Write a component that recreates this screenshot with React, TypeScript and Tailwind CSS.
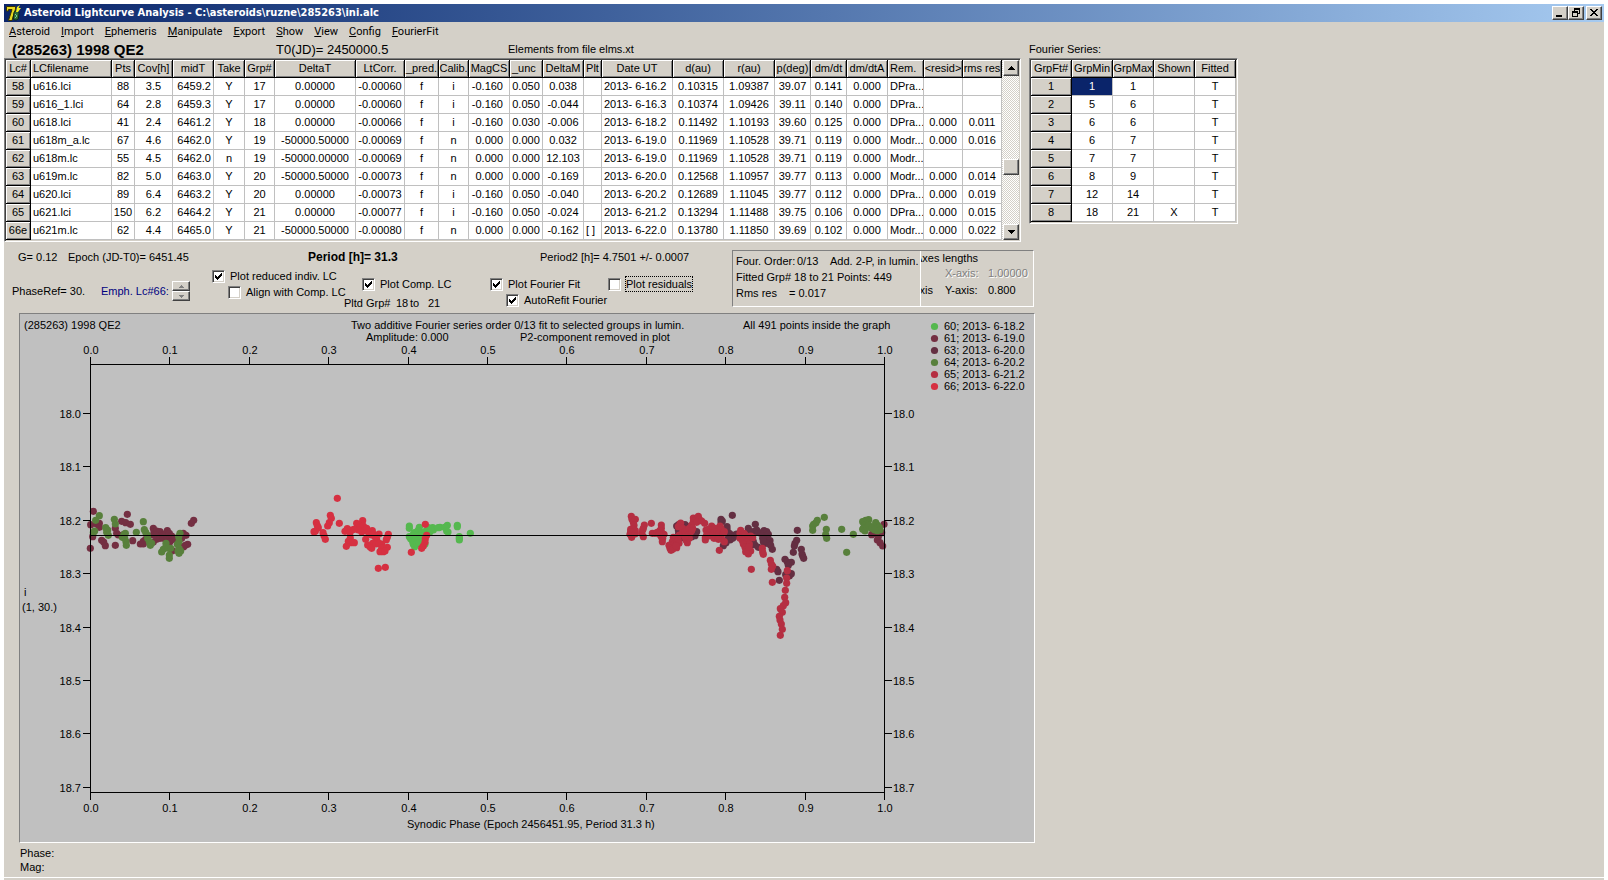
import type { ReactNode } from "react";

const RAISED =
  "border border-t-white border-l-white border-r-[#404040] border-b-[#404040] bg-[#d4d0c8] shadow-[inset_-1px_-1px_0_#808080]";
const SUNKEN =
  "border border-t-[#808080] border-l-[#808080] border-r-white border-b-white shadow-[inset_1px_1px_0_#404040,inset_-1px_-1px_0_#d4d0c8]";

type Align = "l" | "c" | "r" | "m";
type Column = { name: string; w: number; align: Align; head?: "l" };

const lcColumns: Column[] = [
  { name: "Lc#", w: 25, align: "c" },
  { name: "LCfilename", w: 81, align: "l", head: "l" },
  { name: "Pts", w: 23, align: "c" },
  { name: "Cov[h]", w: 38, align: "c" },
  { name: "midT", w: 41, align: "r" },
  { name: "Take", w: 31, align: "c" },
  { name: "Grp#", w: 30, align: "c" },
  { name: "DeltaT", w: 81, align: "c" },
  { name: "LtCorr.", w: 49, align: "c" },
  { name: "_pred.", w: 34, align: "c" },
  { name: "Calib.", w: 30, align: "c" },
  { name: "MagCS", w: 41, align: "m" },
  { name: "_unc", w: 33, align: "c", head: "l" },
  { name: "DeltaM", w: 41, align: "c" },
  { name: "Plt", w: 18, align: "l" },
  { name: "Date UT", w: 71, align: "l" },
  { name: "d(au)", w: 51, align: "c" },
  { name: "r(au)", w: 51, align: "c" },
  { name: "p(deg)", w: 36, align: "c" },
  { name: "dm/dt", w: 36, align: "c" },
  { name: "dm/dtA", w: 41, align: "c" },
  { name: "Rem.", w: 36, align: "l", head: "l" },
  { name: "<resid>", w: 39, align: "c" },
  { name: "rms res", w: 39, align: "c" },
];

const lcRows: string[][] = [
  ["58", "u616.lci", "88", "3.5", "6459.2", "Y", "17", "0.00000", "-0.00060", "f", "i", "-0.160", "0.050", "0.038", "", "2013- 6-16.2", "0.10315", "1.09387", "39.07", "0.141", "0.000", "DPra...", "", ""],
  ["59", "u616_1.lci", "64", "2.8", "6459.3", "Y", "17", "0.00000", "-0.00060", "f", "i", "-0.160", "0.050", "-0.044", "", "2013- 6-16.3", "0.10374", "1.09426", "39.11", "0.140", "0.000", "DPra...", "", ""],
  ["60", "u618.lci", "41", "2.4", "6461.2", "Y", "18", "0.00000", "-0.00066", "f", "i", "-0.160", "0.030", "-0.006", "", "2013- 6-18.2", "0.11492", "1.10193", "39.60", "0.125", "0.000", "DPra...", "0.000", "0.011"],
  ["61", "u618m_a.lc", "67", "4.6", "6462.0", "Y", "19", "-50000.50000", "-0.00069", "f", "n", "0.000", "0.000", "0.032", "", "2013- 6-19.0", "0.11969", "1.10528", "39.71", "0.119", "0.000", "Modr...", "0.000", "0.016"],
  ["62", "u618m.lc", "55", "4.5", "6462.0", "n", "19", "-50000.00000", "-0.00069", "f", "n", "0.000", "0.000", "12.103", "", "2013- 6-19.0", "0.11969", "1.10528", "39.71", "0.119", "0.000", "Modr...", "", ""],
  ["63", "u619m.lc", "82", "5.0", "6463.0", "Y", "20", "-50000.50000", "-0.00073", "f", "n", "0.000", "0.000", "-0.169", "", "2013- 6-20.0", "0.12568", "1.10957", "39.77", "0.113", "0.000", "Modr...", "0.000", "0.014"],
  ["64", "u620.lci", "89", "6.4", "6463.2", "Y", "20", "0.00000", "-0.00073", "f", "i", "-0.160", "0.050", "-0.040", "", "2013- 6-20.2", "0.12689", "1.11045", "39.77", "0.112", "0.000", "DPra...", "0.000", "0.019"],
  ["65", "u621.lci", "150", "6.2", "6464.2", "Y", "21", "0.00000", "-0.00077", "f", "i", "-0.160", "0.050", "-0.024", "", "2013- 6-21.2", "0.13294", "1.11488", "39.75", "0.106", "0.000", "DPra...", "0.000", "0.015"],
  ["66e", "u621m.lc", "62", "4.4", "6465.0", "Y", "21", "-50000.50000", "-0.00080", "f", "n", "0.000", "0.000", "-0.162", "[ ]", "2013- 6-22.0", "0.13780", "1.11850", "39.69", "0.102", "0.000", "Modr...", "0.000", "0.022"],
];

const ftColumns: Column[] = ["GrpFt#", "GrpMin", "GrpMax", "Shown", "Fitted"].map((name) => ({
  name,
  w: 41,
  align: "c",
}));

const ftRows: string[][] = [
  ["1", "1", "1", "", "T"],
  ["2", "5", "6", "", "T"],
  ["3", "6", "6", "", "T"],
  ["4", "6", "7", "", "T"],
  ["5", "7", "7", "", "T"],
  ["6", "8", "9", "", "T"],
  ["7", "12", "14", "", "T"],
  ["8", "18", "21", "X", "T"],
];

const alignClass: Record<Align, string> = {
  l: "text-left pl-[2px]",
  c: "text-center",
  r: "text-right pr-[2px]",
  m: "text-right pr-[6px]",
};

const HEAD_CELL =
  "h-[18px] overflow-hidden border-r border-b border-black bg-[#d4d0c8] p-0 font-normal shadow-[inset_1px_1px_0_#fff,inset_-1px_-1px_0_#808080]";

function Grid({
  columns,
  rows,
  label,
  selected,
}: {
  columns: Column[];
  rows: string[][];
  label: string;
  selected?: [number, number];
}) {
  const total = columns.reduce((sum, c) => sum + c.w, 0);
  return (
    <table
      aria-label={label}
      className="table-fixed border-separate border-spacing-0 bg-white leading-[17px] whitespace-nowrap"
      style={{ width: total }}
    >
      <colgroup>
        {columns.map((c) => (
          <col key={c.name} style={{ width: c.w }} />
        ))}
      </colgroup>
      <thead>
        <tr>
          {columns.map((c) => (
            <th key={c.name} scope="col" className={`${HEAD_CELL} ${c.head ? "pl-[2px] text-left" : "text-center"}`}>
              {c.name}
            </th>
          ))}
        </tr>
      </thead>
      <tbody>
        {rows.map((row, r) => (
          <tr key={row[0]}>
            {row.map((value, i) =>
              i === 0 ? (
                <th key={i} scope="row" className={`${HEAD_CELL} text-center`}>
                  {value}
                </th>
              ) : (
                <td
                  key={i}
                  className={`h-[18px] overflow-hidden border-r border-b border-[#c0c0c0] p-0 ${alignClass[columns[i].align]} ${
                    selected && selected[0] === r && selected[1] === i ? "bg-[#0a246a] text-white" : ""
                  }`}
                >
                  {value}
                </td>
              ),
            )}
          </tr>
        ))}
      </tbody>
    </table>
  );
}

function Arrow({ up, small }: { up?: boolean; small?: boolean }) {
  if (small) {
    return (
      <svg viewBox="0 0 5 3" className="h-[3px] w-[5px]" shapeRendering="crispEdges" aria-hidden="true">
        <path d={up ? "M2 0h1v1h1v1h1v1H0V2h1V1h1z" : "M0 0h5v1H4v1H3v1H2V2H1V1H0z"} fill="#808080" />
      </svg>
    );
  }
  return (
    <svg viewBox="0 0 7 4" className="h-1 w-[7px]" shapeRendering="crispEdges" aria-hidden="true">
      <path d={up ? "M3 0h1v1h1v1h1v1h1v1H0V3h1V2h1V1h1z" : "M0 0h7v1H6v1H5v1H4v1H3V3H2V2H1V1H0z"} fill="#000" />
    </svg>
  );
}

function ScrollBar() {
  return (
    <div className="flex w-[17px] flex-col bg-[repeating-conic-gradient(#fff_0_25%,#d4d0c8_0_50%)] bg-[length:2px_2px] pl-px">
      <button type="button" aria-label="Scroll up" className={`flex h-4 items-center justify-center ${RAISED}`}>
        <Arrow up />
      </button>
      <div className="flex-1 pt-[83px]">
        <div className={`h-4 ${RAISED}`} />
      </div>
      <button type="button" aria-label="Scroll down" className={`flex h-4 items-center justify-center ${RAISED}`}>
        <Arrow />
      </button>
    </div>
  );
}

function Check({ id, label, checked, focused }: { id: string; label: string; checked?: boolean; focused?: boolean }) {
  return (
    <div className="flex h-4 items-center gap-1">
      <span className="relative block h-[13px] w-[13px]">
        <input
          id={id}
          type="checkbox"
          defaultChecked={checked}
          className={`peer block h-[13px] w-[13px] appearance-none bg-white outline-none ${SUNKEN}`}
        />
        <svg
          viewBox="0 0 7 7"
          shapeRendering="crispEdges"
          aria-hidden="true"
          className="pointer-events-none absolute top-[3px] left-[3px] hidden h-[7px] w-[7px] peer-checked:block"
        >
          <path d="M0 2h1v1h1v1h1V3h1V2h1V1h1V0h1v3H6v1H5v1H4v1H3v1H2V6H1V5H0z" fill="#000" />
        </svg>
      </span>
      <label
        htmlFor={id}
        className={
          focused
            ? "border border-dotted border-black leading-[14px] whitespace-nowrap"
            : "border border-transparent leading-[14px] whitespace-nowrap"
        }
      >
        {label}
      </label>
    </div>
  );
}

function TitleButton({ label, children }: { label: string; children: ReactNode }) {
  return (
    <button type="button" aria-label={label} className={`flex h-[14px] w-4 items-center justify-center ${RAISED}`}>
      <svg viewBox="0 0 12 10" className="h-[10px] w-3" shapeRendering="crispEdges" aria-hidden="true">
        {children}
      </svg>
    </button>
  );
}

function AppIcon() {
  return (
    <svg viewBox="0 0 16 16" className="h-4 w-4" aria-hidden="true">
      <path d="M0.500 1.500h9v2.500L6 15.500H2.500L6 4.500H2.500v1.500h-2z" fill="#e8d820" stroke="#3a3400" strokeWidth="1" />
      <path d="M8 8c0-1.500 1-2 2.500-2s2.500 1 2.500 2.500L12.500 13c-.5 1.500-1.500 2-3 2S7 14 7.300 12z" fill="#2f6b3a" stroke="#0d2513" />
      <path d="M10 7l1-5 3-2-1.500 3H15l-3 4z" fill="#f4f020" />
      <path d="M9 9l2 2-2 2" stroke="#7fd08a" fill="none" />
    </svg>
  );
}

const menus = ["Asteroid", "Import", "Ephemeris", "Manipulate", "Export", "Show", "View", "Config", "FourierFit"];

/* Light-curve observations, in thirds of a canvas unit. */
type Pt = [number, number];
type Series = { color: string; x0: number; y0: number; pts: Pt[] };

const series: Series[] = [
  {
    color: "#55b84f", x0: 0, y0: 480,
    pts: [[1228,138],[1228,145],[1228,170],[1232,176],[1258,142],[1254,152],[1244,158],[1240,163],[1250,170],[1258,165],[1265,160],[1238,185],[1245,182],[1255,180],[1262,178],[1265,172],[1240,193],[1244,200],[1250,192],[1258,188],[1275,155],[1282,150],[1290,155],[1298,143],[1300,150],[1292,148],[1285,143],[1320,142],[1315,143],[1342,136],[1334,142],[1340,153],[1344,156],[1372,136],[1372,140],[1378,170],[1378,180],[1378,175],[1411,160],[1275,192],[1270,165]],
  },
  {
    color: "#742f42", x0: 0, y0: 480,
    pts: [[280,94],[382,103],[272,134],[290,132],[298,130],[298,142],[278,170],[271,205],[305,181],[311,186],[316,197],[346,145],[350,160],[355,165],[368,165],[346,196],[365,124],[377,128],[391,133],[398,182],[421,192],[430,184],[430,192],[437,178],[460,145],[462,155],[470,153],[480,155],[460,165],[468,165],[485,165],[490,166],[502,152],[498,160],[508,160],[460,186],[470,178],[480,175],[490,175],[500,175],[510,175],[515,168],[520,178],[510,185],[550,160],[558,166],[545,175],[563,193],[556,196],[551,200],[574,130],[581,121],[517,212]],
  },
  {
    color: "#742f42", x0: 600, y0: 490,
    pts: [[852,103],[815,134],[825,130],[835,140],[832,150],[840,158],[848,168],[845,128],[820,125]],
  },
  {
    color: "#642f42", x0: 600, y0: 490,
    pts: [[397,76],[363,88],[367,93],[363,96],[381,110],[381,118],[466,103],[445,115],[445,125],[592,121],[590,151],[585,160],[583,168],[580,187],[604,178],[606,192],[608,198],[611,205],[517,178],[555,208],[562,216],[574,217],[565,226],[534,245],[530,238],[538,271],[557,254],[568,258],[574,251],[230,108],[236,104],[235,120],[236,130],[240,140],[250,143],[255,104],[265,110],[280,130],[290,125],[285,137],[275,140],[388,130],[395,135],[402,140],[390,150],[398,145],[405,135],[385,145],[370,167],[378,158],[410,132],[430,150],[460,125],[470,120],[475,127],[482,130],[492,122],[490,132],[500,125],[505,133],[500,145],[510,152],[505,160],[497,160],[488,145],[512,166],[465,165],[475,172],[460,155],[452,165],[378,128],[490,155]],
  },
  {
    color: "#58803c", x0: 0, y0: 480,
    pts: [[298,107],[287,121],[284,153],[280,158],[317,143],[323,150],[320,157],[325,166],[343,118],[346,132],[372,163],[376,160],[367,172],[374,175],[378,185],[379,196],[409,157],[430,125],[433,149],[437,157],[442,165],[443,175],[448,185],[451,196],[455,190],[498,190],[490,208],[498,200],[505,205],[485,216],[512,205],[508,225],[508,235],[540,160],[536,170],[537,185],[532,193],[537,205],[542,213],[537,220],[534,213]],
  },
  {
    color: "#58803c", x0: 600, y0: 490,
    pts: [[673,82],[652,91],[648,98],[641,103],[638,108],[638,121],[679,118],[677,134],[680,145],[725,118],[760,133],[740,187],[806,89],[797,91],[788,95],[800,102],[793,105],[790,115],[788,118],[795,123],[802,112],[806,105],[827,98],[832,105],[822,110],[815,115],[830,115],[838,112],[840,120],[832,122],[824,120]],
  },
  {
    color: "#b52f42", x0: 600, y0: 490,
    pts: [[94,79],[96,88],[106,88],[100,97],[102,106],[92,118],[100,118],[98,128],[90,133],[95,142],[106,122],[92,125],[133,105],[130,115],[128,120],[130,140],[105,132],[125,130],[154,100],[157,130],[165,130],[184,105],[184,115],[180,122],[172,127],[185,128],[192,133],[188,145],[187,155],[184,140],[178,133],[220,142],[225,148],[217,155],[207,166],[212,165],[222,163],[230,158],[235,150],[210,175],[213,181],[218,178],[230,173],[237,160],[228,167],[238,135],[240,103],[242,99],[235,110],[248,115],[248,128],[255,125],[262,120],[268,115],[275,105],[280,95],[280,84],[288,88],[295,79],[298,88],[290,97],[278,115],[270,130],[275,122],[262,140],[258,150],[262,158],[268,145],[255,140],[314,100],[305,93],[318,120],[325,118],[335,108],[338,118],[345,115],[330,128],[320,135],[316,143],[316,150],[328,138],[340,130],[350,125],[360,108],[363,115],[358,130],[350,140],[362,140],[342,145],[370,130],[373,125],[365,148],[373,155],[355,148],[358,181],[422,121],[420,130],[432,130],[425,140],[420,145],[436,135],[443,143],[430,150],[427,152],[440,155],[448,162],[430,162],[435,172],[440,180],[452,183],[445,192],[437,185],[452,138],[458,143],[447,170],[454,238],[487,175],[488,186],[490,193],[511,211],[514,222],[518,228],[514,238],[517,277],[562,242],[560,264],[560,280],[556,301],[554,322],[557,338],[550,347],[541,356],[547,367],[538,379],[540,390],[544,402],[547,418],[541,436]],
  },
  {
    color: "#d63041", x0: 0, y0: 480,
    pts: [[1012,55],[991,106],[994,115],[988,128],[983,138],[1018,130],[949,128],[952,137],[955,143],[946,154],[942,155],[969,158],[972,167],[976,178],[1042,146],[1035,154],[1056,150],[1050,158],[1070,130],[1088,122],[1076,134],[1083,140],[1090,138],[1075,150],[1085,155],[1095,152],[1062,148],[1100,145],[1105,155],[1117,152],[1108,162],[1120,162],[1137,162],[1125,170],[1115,165],[1130,178],[1097,178],[1051,174],[1045,184],[1052,188],[1063,188],[1039,199],[1103,195],[1118,190],[1110,200],[1115,205],[1128,192],[1145,192],[1137,190],[1145,205],[1150,215],[1140,215],[1162,202],[1155,213],[1165,163],[1162,172],[1159,179],[1135,265],[1156,262],[1276,133],[1280,166],[1276,176],[1275,187],[1270,198],[1265,205],[1234,217]],
  },
];

const legend: [string, string][] = [
  ["60; 2013- 6-18.2", "#55b84f"],
  ["61; 2013- 6-19.0", "#742f42"],
  ["63; 2013- 6-20.0", "#642f42"],
  ["64; 2013- 6-20.2", "#58803c"],
  ["65; 2013- 6-21.2", "#b52f42"],
  ["66; 2013- 6-22.0", "#d63041"],
];

const xTicks = Array.from({ length: 11 }, (_, i) => ({ x: Math.round(90 + i * 79.4), t: (i / 10).toFixed(1) }));
const yTicks = Array.from({ length: 8 }, (_, i) => ({ y: Math.round(413 + i * 53.4), t: (18 + i / 10).toFixed(1) }));

function Chart() {
  return (
    <svg viewBox="20 314 1014 528" className="block h-[528px] w-[1014px]" role="img" aria-label="Light curve plot">
      <g fill="#000">
        <text x="24" y="329">(285263) 1998 QE2</text>
        <text x="351" y="329">Two additive Fourier series order 0/13 fit to selected groups in lumin.</text>
        <text x="366" y="341">Amplitude: 0.000</text>
        <text x="520" y="341">P2-component removed in plot</text>
        <text x="743" y="329">All 491 points inside the graph</text>
        <text x="24" y="596">i</text>
        <text x="22" y="611">(1, 30.)</text>
        <text x="407" y="828">Synodic Phase (Epoch 2456451.95, Period 31.3 h)</text>
        {xTicks.map(({ x, t }) => (
          <g key={t} textAnchor="middle">
            <text x={x + 1} y="354">{t}</text>
            <text x={x + 1} y="812">{t}</text>
          </g>
        ))}
        {yTicks.map(({ y, t }) => (
          <g key={t}>
            <text x="81" y={y + 5} textAnchor="end">{t}</text>
            <text x="893" y={y + 5}>{t}</text>
          </g>
        ))}
      </g>
      {legend.map(([t, color], i) => (
        <g key={t}>
          <circle cx="934.500" cy={326.5 + i * 12} r="3.600" fill={color} />
          <text x="944" y={330 + i * 12}>{t}</text>
        </g>
      ))}
      {series.map((s, i) => (
        <g key={i} fill={s.color}>
          {s.pts.map(([x, y], j) => (
            <circle key={j} cx={s.x0 + x / 3} cy={s.y0 + y / 3} r="3.600" />
          ))}
        </g>
      ))}
      <g fill="#000" shapeRendering="crispEdges">
        <rect x="90" y="364" width="795" height="1" />
        <rect x="90" y="792" width="795" height="1" />
        <rect x="90" y="357" width="1" height="443" />
        <rect x="884" y="357" width="1" height="443" />
        <rect x="90" y="535" width="795" height="1" />
        {xTicks.map(({ x, t }) => (
          <g key={t}>
            <rect x={x} y="357" width="1" height="7" />
            <rect x={x} y="793" width="1" height="7" />
          </g>
        ))}
        {yTicks.map(({ y, t }) => (
          <g key={t}>
            <rect x="83" y={y} width="7" height="1" />
            <rect x="885" y={y} width="7" height="1" />
          </g>
        ))}
      </g>
    </svg>
  );
}

export default function App() {
  return (
    <div className="flex min-h-screen flex-col bg-white px-1 pt-1 font-['Liberation_Sans',sans-serif] text-[11px] leading-4 text-black">
      <div className="flex flex-1 flex-col bg-[#d4d0c8]">
        <header className="flex h-[18px] items-center bg-linear-to-r from-[#0a246a] to-[#a6caf0] pr-[2px] pl-[2px]">
          <AppIcon />
          <h1 className="flex-1 pl-[2px] font-['DejaVu_Sans_Condensed','DejaVu_Sans',sans-serif] text-[11px] leading-[18px] font-bold whitespace-nowrap text-white">
            Asteroid Lightcurve Analysis - C:\asteroids\ruzne\285263\ini.alc
          </h1>
          <div className="flex">
            <TitleButton label="Minimize">
              <path d="M2 7h6v2H2z" />
            </TitleButton>
            <TitleButton label="Restore">
              <path d="M4 0h6v6H8V5h1V2H5v1H4zM2 3h6v6H2zm1 2v3h4V5z" fillRule="evenodd" />
            </TitleButton>
            <span className="w-[2px]" />
            <TitleButton label="Close">
              <path d="M2 1h2v1h1v1h2V2h1V1h2v1H9v1H8v1H7v1h1v1h1v1h1v1H8V7H7V6H5v1H4v1H2V7h1V6h1V5h1V4H4V3H3V2H2z" />
            </TitleButton>
          </div>
        </header>

        <nav className="flex h-[18px] items-end gap-[11px] pl-[5px] font-['Roboto',sans-serif]">
          {menus.map((m) => (
            <button key={m} type="button">
              <span className="underline underline-offset-1">{m[0]}</span>
              {m.slice(1)}
            </button>
          ))}
        </nav>

        <div className="flex h-[18px] items-center">
          <h2 className="w-[264px] pt-[2px] pl-2 text-[15px] font-bold">(285263) 1998 QE2</h2>
          <p className="w-[240px] pt-[2px] pl-2 text-[13px]">T0(JD)= 2450000.5</p>
          <p className="w-[521px]">Elements from file elms.xt</p>
          <p>Fourier Series:</p>
        </div>

        <div className="flex items-start gap-2">
          <div className={`flex p-px ${SUNKEN}`}>
            <Grid columns={lcColumns} rows={lcRows} label="Light curves" />
            <ScrollBar />
          </div>
          <div className={`p-px ${SUNKEN}`}>
            <Grid columns={ftColumns} rows={ftRows} label="Fourier series" selected={[0, 1]} />
          </div>
        </div>

        <div className="flex h-[71px] items-start whitespace-nowrap">
          <div className="w-[728px] pt-[7px]">
            <div className="flex">
              <p className="w-16 pl-[14px]">G= 0.12</p>
              <p className="w-[240px]">Epoch (JD-T0)= 6451.45</p>
              <p className="w-[232px] text-[12px] font-bold">Period [h]= 31.3</p>
              <p>Period2 [h]= 4.7501 +/- 0.0007</p>
            </div>
            <div className="flex items-start">
              <div className="mt-4 flex w-[208px] items-center pl-2">
                <span className="w-[89px]">PhaseRef= 30.</span>
                <span className="w-[71px] text-[#000080]">Emph. Lc#66:</span>
                <span className="flex w-[18px] flex-col">
                  <button type="button" aria-label="Next curve" className={`flex h-[10px] items-center justify-center ${RAISED}`}>
                    <Arrow up small />
                  </button>
                  <button type="button" aria-label="Previous curve" className={`flex h-[10px] items-center justify-center ${RAISED}`}>
                    <Arrow small />
                  </button>
                </span>
              </div>
              <div className="w-[132px] pt-[3px]">
                <Check id="reduced" label="Plot reduced indiv. LC" checked />
                <div className="pl-4">
                  <Check id="align" label="Align with Comp. LC" />
                </div>
              </div>
              <div className="w-[146px] pt-[11px]">
                <div className="pl-[18px]">
                  <Check id="comp" label="Plot Comp. LC" checked />
                </div>
                <p className="flex pt-[3px]">
                  <span className="w-[52px]">Pltd Grp#</span>
                  <span className="w-[14px]">18</span>
                  <span className="w-[18px]">to</span>
                  <span>21</span>
                </p>
              </div>
              <div className="w-[118px] pt-[11px]">
                <Check id="fit" label="Plot Fourier Fit" checked />
                <div className="pl-4">
                  <Check id="auto" label="AutoRefit Fourier" checked />
                </div>
              </div>
              <div className="pt-[11px]">
                <Check id="resid" label="Plot residuals" focused />
              </div>
            </div>
          </div>

          <div className="mt-2 flex h-[57px] w-[302px] border border-t-[#808080] border-r-white border-b-white border-l-[#808080]">
            <div className="w-[188px] border-r border-white pt-[2px] pl-[3px]">
              <p className="flex">
                <span className="w-[61px]">Four. Order:</span>
                <span className="w-[33px]">0/13</span>
                <span>Add. 2-P, in lumin.</span>
              </p>
              <p>Fitted Grp# 18 to 21 Points: 449</p>
              <p className="flex">
                <span className="w-[53px]">Rms res</span>= 0.017
              </p>
            </div>
            <div className="flex-1">
              <p className="flex w-[57px] justify-end overflow-hidden leading-[14px]">Axes lengths</p>
              <p className="flex text-[#808080] [text-shadow:1px_1px_0_#fff]">
                <span className="w-6" />
                <span className="w-[43px]">X-axis:</span>
                <span>1.00000</span>
              </p>
              <p className="flex pt-px">
                <span className="flex w-3 justify-end overflow-hidden">axis</span>
                <span className="ml-3 w-[43px]">Y-axis:</span>
                <span>0.800</span>
              </p>
            </div>
          </div>
        </div>

        <div className="ml-[15px] w-[1016px] border border-t-[#808080] border-r-white border-b-white border-l-[#808080] bg-[#c0c0c0]">
          <Chart />
        </div>

        <footer className="border-b border-white pt-[3px] pb-[3px] pl-4 leading-[14px]">
          <p>Phase:</p>
          <p>Mag:</p>
        </footer>
      </div>
    </div>
  );
}
